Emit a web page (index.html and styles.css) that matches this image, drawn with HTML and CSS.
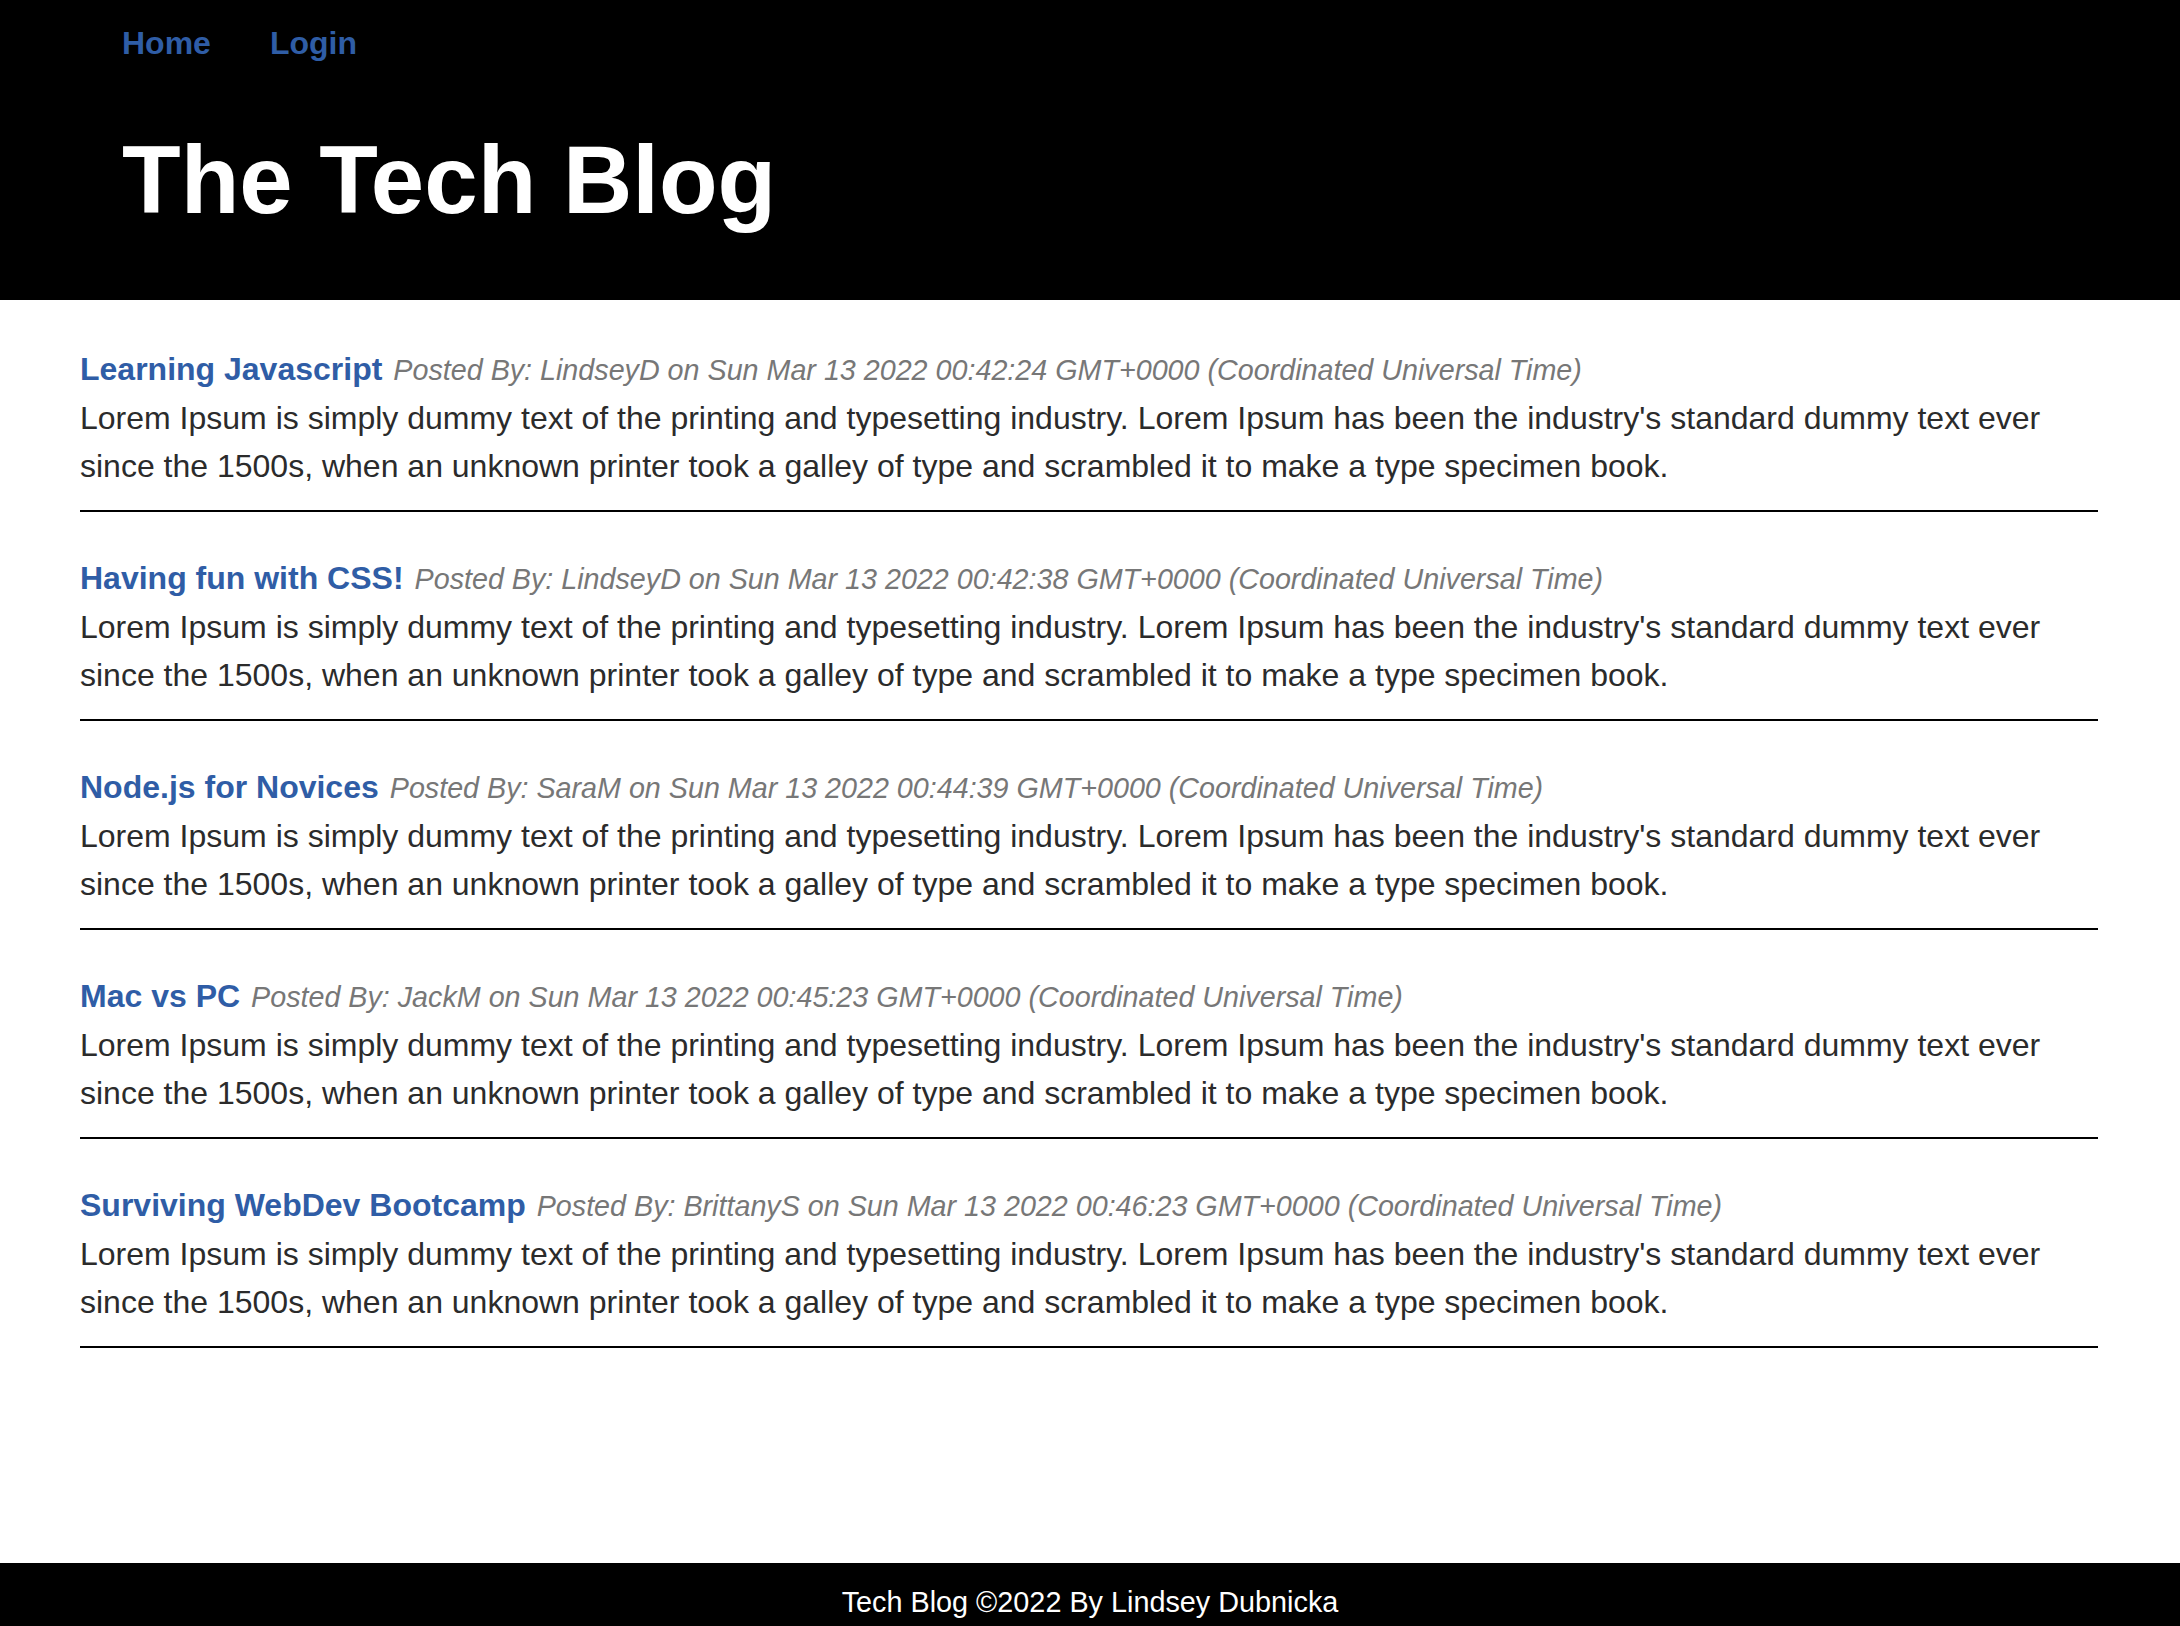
FILE: index.html
```html
<!DOCTYPE html>
<html lang="en">
<head>
<meta charset="utf-8">
<title>The Tech Blog</title>
<link rel="stylesheet" href="styles.css">
</head>
<body>
<header class="site-header">
  <nav class="nav">
    <a class="nav-link" href="#">Home</a>
    <a class="nav-link" href="#">Login</a>
  </nav>
  <h1 class="site-title">The Tech Blog</h1>
</header>
<main class="posts">
  <article class="post">
    <div class="post-head"><a class="post-title" href="#">Learning Javascript</a><span class="post-meta">Posted By: LindseyD on Sun Mar 13 2022 00:42:24 GMT+0000 (Coordinated Universal Time)</span></div>
    <p class="post-body">Lorem Ipsum is simply dummy text of the printing and typesetting industry. Lorem Ipsum has been the industry's standard dummy text ever since the 1500s, when an unknown printer took a galley of type and scrambled it to make a type specimen book.</p>
  </article>
  <article class="post">
    <div class="post-head"><a class="post-title" href="#">Having fun with CSS!</a><span class="post-meta">Posted By: LindseyD on Sun Mar 13 2022 00:42:38 GMT+0000 (Coordinated Universal Time)</span></div>
    <p class="post-body">Lorem Ipsum is simply dummy text of the printing and typesetting industry. Lorem Ipsum has been the industry's standard dummy text ever since the 1500s, when an unknown printer took a galley of type and scrambled it to make a type specimen book.</p>
  </article>
  <article class="post">
    <div class="post-head"><a class="post-title" href="#">Node.js for Novices</a><span class="post-meta">Posted By: SaraM on Sun Mar 13 2022 00:44:39 GMT+0000 (Coordinated Universal Time)</span></div>
    <p class="post-body">Lorem Ipsum is simply dummy text of the printing and typesetting industry. Lorem Ipsum has been the industry's standard dummy text ever since the 1500s, when an unknown printer took a galley of type and scrambled it to make a type specimen book.</p>
  </article>
  <article class="post">
    <div class="post-head"><a class="post-title" href="#">Mac vs PC</a><span class="post-meta">Posted By: JackM on Sun Mar 13 2022 00:45:23 GMT+0000 (Coordinated Universal Time)</span></div>
    <p class="post-body">Lorem Ipsum is simply dummy text of the printing and typesetting industry. Lorem Ipsum has been the industry's standard dummy text ever since the 1500s, when an unknown printer took a galley of type and scrambled it to make a type specimen book.</p>
  </article>
  <article class="post">
    <div class="post-head"><a class="post-title" href="#">Surviving WebDev Bootcamp</a><span class="post-meta">Posted By: BrittanyS on Sun Mar 13 2022 00:46:23 GMT+0000 (Coordinated Universal Time)</span></div>
    <p class="post-body">Lorem Ipsum is simply dummy text of the printing and typesetting industry. Lorem Ipsum has been the industry's standard dummy text ever since the 1500s, when an unknown printer took a galley of type and scrambled it to make a type specimen book.</p>
  </article>
</main>
<footer class="site-footer">Tech Blog ©2022 By Lindsey Dubnicka</footer>
</body>
</html>
```

FILE: styles.css
```css
html, body {
  margin: 0;
  padding: 0;
}
body {
  min-height: 100vh;
  display: flex;
  flex-direction: column;
  font-family: "Liberation Sans", Arial, Helvetica, sans-serif;
  background: #fff;
  color: #2b2b2b;
}
.site-header {
  background: #000;
  padding: 26px 122px 65px;
}
.nav {
  display: flex;
  gap: 59px;
}
.nav-link {
  color: #2f5da6;
  font-weight: bold;
  font-size: 32px;
  text-decoration: none;
  line-height: 34px;
}
.site-title {
  margin: 65px 0 0;
  color: #fff;
  font-size: 96px;
  font-weight: bold;
  line-height: 110px;
}
.posts {
  flex: 1;
  padding: 51px 82px 0 80px;
}
.post {
  border-bottom: 2px solid #000;
  padding-bottom: 20px;
  margin-bottom: 48px;
}
.post-head {
  line-height: 36px;
}
.post-title {
  color: #2f5da6;
  font-weight: bold;
  font-size: 32px;
  text-decoration: none;
}
.post-meta {
  margin-left: 11px;
  color: #777;
  font-style: italic;
  font-size: 28.7px;
}
.post-body {
  margin: 1px 0 0;
  font-size: 32px;
  line-height: 48px;
}
.site-footer {
  background: #000;
  color: #fff;
  height: 63px;
  display: flex;
  align-items: center;
  justify-content: center;
  font-size: 28.8px;
  padding-top: 15px;
  box-sizing: border-box;
}
```
